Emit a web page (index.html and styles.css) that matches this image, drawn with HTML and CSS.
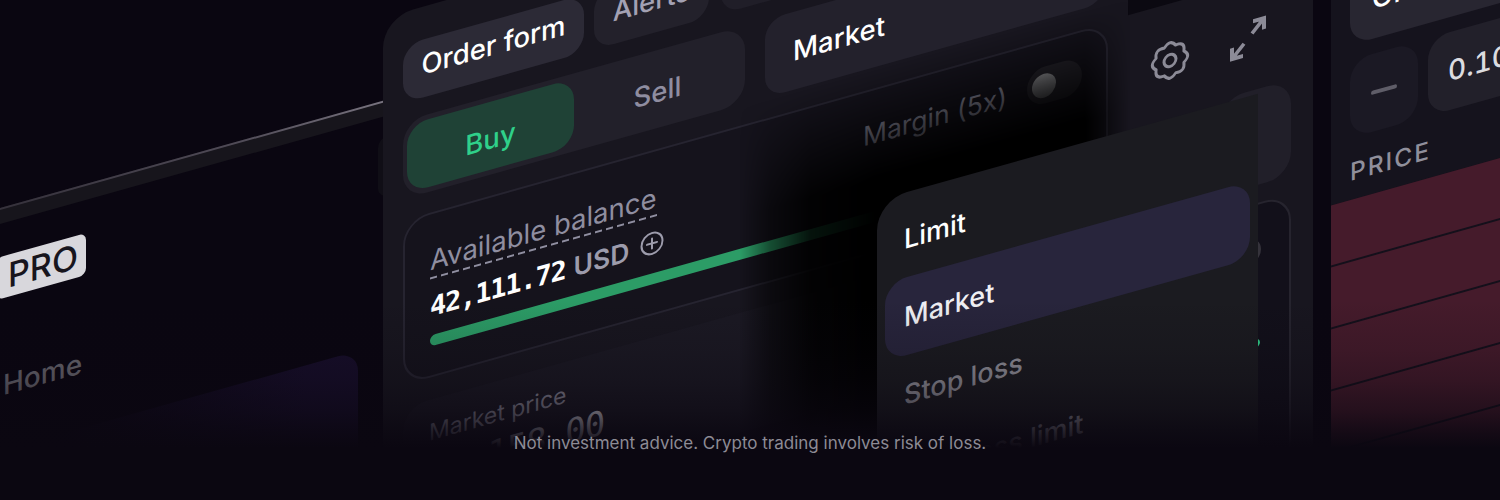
FILE: index.html
```html
<!DOCTYPE html>
<html lang="en">
<head>
<meta charset="utf-8">
<title>Pro trading</title>
<link rel="stylesheet" href="styles.css">
</head>
<body>
<main class="stage">
  <div class="canvas">
    <section class="window sidebar">
      <div class="sidebar-band"></div>
      <span class="pro-badge">PRO</span>
      <span class="nav-home">Home</span>
      <div class="nav-active"></div>
    </section>

    <div class="behind-card"></div>

    <section class="window main-panel">
      <div class="form">
        <div class="tabs">
          <span class="tab tab-active">Order form</span>
          <span class="tab tab-alerts">Alerts</span>
          <span class="tab tab-third"></span>
        </div>
        <div class="controls">
          <div class="segment">
            <span class="seg-buy">Buy</span>
            <span class="seg-sell">Sell</span>
          </div>
          <div class="select"><span>Market</span></div>
        </div>
        <div class="card">
          <div class="card-top">
            <div class="label-wrap"><span class="balance-label">Available balance</span></div>
            <div class="margin">
              <span class="margin-label">Margin (5x)</span>
              <span class="toggle"><span class="knob"></span></span>
            </div>
          </div>
          <div class="amount">
            <span class="amount-value">42,111.72</span>
            <span class="amount-unit">USD</span>
            <svg class="plus" viewBox="0 0 24 24" fill="none" stroke="currentColor" stroke-width="2" stroke-linecap="round"><circle cx="12" cy="12" r="10.5"/><path d="M12 7v10M7 12h10"/></svg>
          </div>
          <div class="bar"></div>
        </div>
        <div class="price-input">
          <span class="price-label">Market price</span>
          <span class="price-value">68,158.00</span>
        </div>
      </div>
      <div class="aside">
        <div class="notch"></div>
        <div class="tools">
          <svg class="tool" viewBox="0 0 40 40" fill="none" stroke="currentColor" stroke-width="3" stroke-linejoin="round" stroke-linecap="round"><path d="M33.9 25.7Q35.2 35.2 25.7 33.9Q20 41.5 14.3 33.9Q4.8 35.2 6.1 25.7Q-1.5 20 6.1 14.3Q4.8 4.8 14.3 6.1Q20 -1.5 25.7 6.1Q35.2 4.8 33.9 14.3Q41.5 20 33.9 25.7Z"/><circle cx="20" cy="20" r="6"/></svg>
          <svg class="tool" viewBox="0 0 40 40" fill="none" stroke="currentColor" stroke-width="4" stroke-linejoin="miter"><path d="M4 25V36H15M4 36L16 24M36 15V4H25M36 4L24 16"/></svg>
        </div>
        <div class="aside-button"></div>
        <div class="aside-card">
          <span class="peek peek-gray"></span>
          <span class="peek peek-green"></span>
        </div>
      </div>
    </section>

    <div class="shade"></div>

    <section class="dropdown">
      <span class="option option-white">Limit</span>
      <span class="option option-selected">Market</span>
      <span class="option option-muted">Stop loss</span>
      <span class="option option-muted">Stop loss limit</span>
    </section>

    <section class="window book">
      <div class="book-head">
        <div class="book-select">Order size</div>
        <div class="stepper">
          <span class="step-btn"><span class="step-dash"></span></span>
          <span class="step-input">0.10000</span>
        </div>
        <div class="book-title">PRICE</div>
      </div>
      <div class="book-rows">
        <div class="book-row"></div>
        <div class="book-row"></div>
        <div class="book-row"></div>
        <div class="book-row"></div>
        <div class="book-row"></div>
      </div>
    </section>
  </div>
  <div class="fade"></div>
  <p class="note">Not investment advice. Crypto trading involves risk of loss.</p>
</main>
</body>
</html>
```

FILE: styles.css
```css
* { box-sizing: border-box; }

html, body {
  margin: 0;
  background: #0a0611;
}

.stage {
  position: relative;
  width: 1500px;
  height: 500px;
  overflow: hidden;
  background: #0a0611;
  font-family: Inter, "Liberation Sans", sans-serif;
}

.canvas {
  position: absolute;
  left: 0;
  top: 0;
  width: 1500px;
  height: 1100px;
  transform-origin: 0 0;
  transform: skewY(-15.64deg);
}

.window { position: absolute; }

/* sidebar */
.sidebar {
  left: 0;
  top: 208px;
  width: 390px;
  height: 700px;
  display: flex;
  flex-direction: column;
  align-items: flex-start;
}

.sidebar-band {
  width: 100%;
  height: 16px;
  background: #17151c;
  border-top: 2px solid;
  border-image: linear-gradient(to right, #35313b, #4f4a56 60%, #7a7581) 1;
}

.pro-badge {
  margin: 33px 0 0 -4px;
  width: 90px;
  height: 42px;
  border-radius: 7px;
  background: #d8d7dc;
  color: #17151d;
  font-size: 34px;
  font-weight: 500;
  line-height: 42px;
  text-align: center;
  padding-left: 4px;
}

.nav-home {
  margin: 70px 0 0 3px;
  color: #6a6870;
  font-size: 28px;
  font-weight: 500;
  line-height: 34px;
}

.nav-active {
  margin-top: 48px;
  width: 358px;
  height: 200px;
  border-radius: 20px;
  background: linear-gradient(to right, #0a0611 15%, #170e2a 85%);
}

.behind-card {
  position: absolute;
  left: 378px;
  top: 244px;
  width: 24px;
  height: 60px;
  border-radius: 10px;
  background: #100e16;
}

/* main panel */
.main-panel {
  left: 383px;
  top: 125px;
  width: 930px;
  height: 840px;
  border-radius: 30px 0 0 0;
  background: #18161f;
  display: flex;
}

.form {
  margin-left: 20px;
  width: 705px;
  display: flex;
  flex-direction: column;
  padding-top: 33px;
}

.tabs {
  display: flex;
  gap: 10px;
  height: 58px;
}

.tab {
  display: flex;
  align-items: center;
  justify-content: center;
  height: 58px;
  padding-bottom: 9px;
  border-radius: 20px;
  font-size: 27.5px;
  font-weight: 500;
}

.tab-active {
  width: 181px;
  background: #2c2a36;
  color: #fff;
}

.tab-alerts {
  width: 115px;
  background: #23212b;
  color: #a3a1b3;
}

.tab-third {
  width: 180px;
  background: #201e28;
  margin-left: 2px;
}

.controls {
  margin-top: 18px;
  display: grid;
  grid-template-columns: 342px 340px;
  gap: 20px;
  height: 78px;
}

.segment {
  display: grid;
  grid-template-columns: 167px 1fr;
  padding: 5px 4px;
  border-radius: 24px;
  background: #22202a;
}

.seg-buy, .seg-sell {
  display: flex;
  align-items: center;
  justify-content: center;
  padding-top: 5px;
  font-size: 27.5px;
  font-weight: 500;
}

.seg-buy {
  border-radius: 21px;
  background: #1f4236;
  color: #2fd08a;
}

.seg-sell { color: #8f8da0; }

.select {
  display: flex;
  align-items: center;
  padding-left: 28px;
  border-radius: 20px;
  background: #23212c;
  color: #fff;
  font-size: 27.5px;
  font-weight: 500;
}

.card {
  margin-top: 21px;
  height: 165px;
  padding: 30px 24px 0 25px;
  border: 2px solid #262430;
  border-radius: 26px;
  background: #15131c;
  display: flex;
  flex-direction: column;
}

.card-top {
  display: flex;
  justify-content: space-between;
  align-items: flex-start;
}

.balance-label {
  display: inline-block;
  padding-bottom: 2px;
  color: #8f8ea0;
  font-size: 27.5px;
  line-height: 33px;
  background: repeating-linear-gradient(to right, #8f8ea0 0 7px, transparent 7px 11px) left bottom / 100% 2.5px no-repeat;
}

.margin {
  display: flex;
  align-items: center;
  gap: 20px;
  margin-top: -6px;
}

.margin-label {
  color: #8f8ea0;
  font-size: 26.5px;
}

.toggle {
  display: flex;
  align-items: center;
  width: 55px;
  height: 37px;
  padding-left: 5px;
  border-radius: 19px;
  background: #26242c;
}

.knob {
  width: 24px;
  height: 24px;
  border-radius: 50%;
  background: linear-gradient(to bottom, #9a9a9e, #5c5c60);
}

.amount {
  display: flex;
  align-items: baseline;
  margin-top: 9px;
  height: 36px;
  line-height: 36px;
}

.amount-value {
  color: #fff;
  font-family: "DejaVu Sans Mono", "Liberation Mono", monospace;
  font-size: 27px;
  font-weight: 700;
  letter-spacing: -1.2px;
}

.amount-unit {
  margin-left: 8px;
  color: #9d9cac;
  font-size: 26.5px;
  font-weight: 600;
}

.plus {
  align-self: center;
  margin-left: 11px;
  margin-top: -2px;
  width: 24px;
  height: 24px;
  color: #9d9cac;
}

.bar {
  margin-top: 11px;
  height: 11px;
  border-radius: 6px;
  background: #2c9c66;
}

.price-input {
  margin-top: 22px;
  height: 120px;
  padding: 16px 26px;
  border-radius: 24px;
  background: #1b1923;
  display: flex;
  flex-direction: column;
}

.price-label {
  color: #8a8897;
  font-size: 23px;
  line-height: 34px;
}

.price-value {
  margin-top: 2px;
  color: #d4d3dc;
  font-family: "DejaVu Sans Mono", monospace;
  font-size: 34px;
  letter-spacing: -1px;
  line-height: 38px;
}

/* panel aside */
.aside {
  position: relative;
  flex: 1;
  padding: 243px 22px 0 20px;
}

.notch {
  position: absolute;
  left: 20px;
  top: 0;
  width: 120px;
  height: 206px;
  background: #0b0911;
}

.tools {
  display: flex;
  gap: 38px;
  padding-left: 22px;
}

.tool {
  width: 40px;
  height: 40px;
  color: #8c8b97;
}

.aside-button {
  margin: 33px 0 0 92px;
  height: 96px;
  border-radius: 24px;
  background: #211f29;
}

.aside-card {
  position: relative;
  margin-top: 18px;
  height: 300px;
  border: 2px solid #26242e;
  border-radius: 26px;
  background: #12101a;
}

.peek {
  position: absolute;
  border-radius: 50%;
}

.peek-gray {
  left: 105px;
  top: 32px;
  width: 26px;
  height: 26px;
  background: #35333b;
}

.peek-green {
  left: 118px;
  top: 133px;
  width: 12px;
  height: 10px;
  background: #2fd08a;
}

/* dropdown shade */
.shade {
  position: absolute;
  left: 740px;
  top: 315px;
  width: 390px;
  height: 600px;
  background: linear-gradient(to right, rgba(0,0,0,0) 0, rgba(0,0,0,0.5) 30px, rgba(0,0,0,0.88) 70px, #000 135px, #000 345px, rgba(0,0,0,0) 390px);
  -webkit-mask-image: linear-gradient(to bottom, transparent 0, #000 110px);
  mask-image: linear-gradient(to bottom, transparent 0, #000 110px);
}

.dropdown {
  position: absolute;
  left: 877px;
  top: 446px;
  width: 381px;
  height: 420px;
  padding: 7px 8px;
  border-radius: 30px 0 0 0;
  background: #1b1b20;
  display: flex;
  flex-direction: column;
}

.option {
  display: flex;
  align-items: center;
  height: 78px;
  padding-left: 19px;
  border-radius: 22px;
  font-size: 27px;
  font-weight: 500;
  flex: none;
}

.option-white { color: #fff; }

.option-selected {
  background: #28253c;
  color: #f0f0f4;
}

.option-muted { color: #94939c; }

/* order book */
.book {
  left: 1331px;
  top: 300px;
  width: 300px;
  height: 800px;
  background: #15131d;
  display: flex;
  flex-direction: column;
}

.book-head {
  padding: 43px 0 0 19px;
  height: 278px;
}

.book-select {
  display: flex;
  align-items: center;
  padding-left: 22px;
  height: 80px;
  width: 320px;
  border-radius: 22px;
  background: #282631;
  color: #fff;
  font-size: 28px;
  font-weight: 500;
}

.stepper {
  display: flex;
  gap: 10px;
  margin-top: 15px;
  height: 78px;
  width: 320px;
}

.step-btn {
  display: flex;
  align-items: center;
  justify-content: center;
  flex: none;
  width: 68px;
  border-radius: 22px;
  background: #1b1924;
}

.step-dash {
  width: 26px;
  height: 4px;
  border-radius: 2px;
  background: #5f5d68;
}

.step-input {
  display: flex;
  align-items: center;
  flex: 1;
  padding-left: 20px;
  border-radius: 22px;
  background: #22202a;
  color: #dcdce0;
  font-size: 28px;
  font-weight: 500;
  font-variant-numeric: tabular-nums;
}

.book-title {
  margin-top: 19px;
  color: #908f9b;
  font-size: 24.5px;
  font-weight: 500;
  letter-spacing: 2px;
  line-height: 30px;
}

.book-rows {
  display: flex;
  flex-direction: column;
  gap: 2px;
  background: #14101b;
}

.book-row {
  height: 60px;
  background: #451b2b;
}

/* bottom fade and caption */
.fade {
  position: absolute;
  left: 0;
  right: 0;
  bottom: 0;
  height: 200px;
  background: linear-gradient(to bottom, rgba(11,7,17,0) 0, rgba(11,7,17,0.15) 25%, rgba(11,7,17,0.3) 40%, rgba(11,7,17,0.55) 55%, rgba(11,7,17,0.8) 65%, #0b0711 74%);
}

.note {
  position: absolute;
  left: 0;
  right: 0;
  top: 433px;
  margin: 0;
  color: #8d8b95;
  font-size: 17px;
  line-height: 20px;
  text-align: center;
}
```
